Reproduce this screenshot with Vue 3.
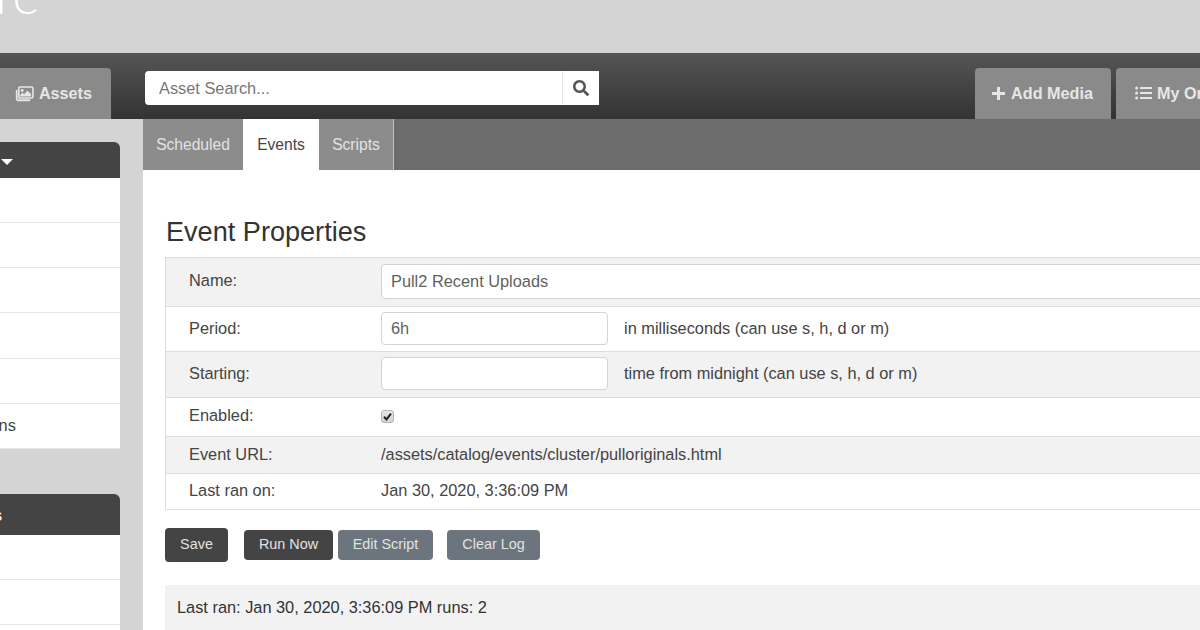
<script setup>
const panels = [
  { title: 'Categories', caret: true, tall: false, rows: ['', '', '', '', '', 'Conversions'] },
  { title: 'Settings', caret: false, tall: true, rows: ['', '', ''] }
]
const tabs = [
  { label: 'Scheduled', active: false },
  { label: 'Events', active: true },
  { label: 'Scripts', active: false }
]
</script>

<template>
  <div class="page">
    <header class="brand"><span class="logo">ue</span></header>

    <nav class="nav">
      <a class="nav-tab assets">
        <svg class="ico-images" viewBox="0 0 18 16" aria-hidden="true">
          <path d="M4.8 1.9h11c.7 0 1.2.5 1.2 1.2v8c0 .7-.5 1.2-1.2 1.2h-11c-.7 0-1.2-.5-1.2-1.2v-8c0-.7.5-1.2 1.2-1.2z" fill="none" stroke="currentColor" stroke-width="1.5"/>
          <path d="M1.6 4.8v8.4c0 .7.5 1.2 1.2 1.2h11.6" fill="none" stroke="currentColor" stroke-width="1.7"/>
          <circle cx="6.8" cy="5.1" r="1.4" fill="currentColor"/>
          <path d="M5 10.9V9l2-1.7 1.6 1.3 3.2-3.3 3.4 3.2v2.4z" fill="currentColor"/>
        </svg>
        Assets
      </a>
      <form class="search" @submit.prevent>
        <input class="search-input" placeholder="Asset Search..." />
        <button class="search-btn" type="button" aria-label="Search">
          <svg viewBox="0 0 512 512" class="ico-search" aria-hidden="true">
            <path fill="currentColor" d="M505 442.7L405.3 343c-4.5-4.5-10.6-7-17-7H372c27.6-35.3 44-79.7 44-128C416 93.1 322.9 0 208 0S0 93.1 0 208s93.1 208 208 208c48.3 0 92.7-16.4 128-44v16.3c0 6.4 2.5 12.5 7 17l99.7 99.7c9.4 9.4 24.6 9.4 33.9 0l28.3-28.3c9.4-9.4 9.4-24.6.1-34zM208 336c-70.7 0-128-57.2-128-128 0-70.7 57.2-128 128-128 70.7 0 128 57.2 128 128 0 70.7-57.2 128-128 128z"/>
          </svg>
        </button>
      </form>
      <a class="nav-tab add">
        <svg class="ico-plus" viewBox="0 0 15 15" aria-hidden="true">
          <path d="M7.5 1v13M1 7.5h13" stroke="currentColor" stroke-width="3" fill="none"/>
        </svg>
        Add Media
      </a>
      <a class="nav-tab orders">
        <svg class="ico-list" viewBox="0 0 17 14" aria-hidden="true">
          <circle cx="1.6" cy="2" r="1.5" fill="currentColor"/>
          <circle cx="1.6" cy="7" r="1.5" fill="currentColor"/>
          <circle cx="1.6" cy="12" r="1.5" fill="currentColor"/>
          <path d="M5 2h12M5 7h12M5 12h12" stroke="currentColor" stroke-width="1.8" fill="none"/>
        </svg>
        My Orders
      </a>
    </nav>

    <div class="body">
      <aside class="sidebar">
        <section v-for="panel in panels" :key="panel.title" class="panel">
          <h4 class="panel-head" :class="{ tall: panel.tall }">
            {{ panel.title }}
            <span v-if="panel.caret" class="caret"></span>
          </h4>
          <ul class="panel-list">
            <li v-for="(row, i) in panel.rows" :key="i">{{ row }}</li>
          </ul>
        </section>
      </aside>

      <main class="main">
        <div class="tabs">
          <a v-for="tab in tabs" :key="tab.label" class="tab" :class="{ active: tab.active }">{{ tab.label }}</a>
        </div>

        <div class="content">
          <h3 class="title">Event Properties</h3>
          <table class="props">
            <tbody>
              <tr class="r1 shade">
                <th>Name:</th>
                <td class="lift"><input class="field wide" value="Pull2 Recent Uploads" /></td>
              </tr>
              <tr class="r2">
                <th>Period:</th>
                <td class="inline lift">
                  <input class="field" value="6h" />
                  <span class="hint">in milliseconds (can use s, h, d or m)</span>
                </td>
              </tr>
              <tr class="r3 shade">
                <th>Starting:</th>
                <td class="inline lift">
                  <input class="field" value="" />
                  <span class="hint">time from midnight (can use s, h, d or m)</span>
                </td>
              </tr>
              <tr class="r4">
                <th>Enabled:</th>
                <td class="lift">
                  <span class="check">
                    <svg viewBox="0 0 13 13" aria-hidden="true">
                      <path d="M3 6.8l2.5 2.6L10 3.6" fill="none" stroke="#222" stroke-width="2"/>
                    </svg>
                  </span>
                </td>
              </tr>
              <tr class="r5 shade">
                <th>Event URL:</th>
                <td class="lift">/assets/catalog/events/cluster/pulloriginals.html</td>
              </tr>
              <tr class="r6">
                <th>Last ran on:</th>
                <td class="lift">Jan 30, 2020, 3:36:09 PM</td>
              </tr>
            </tbody>
          </table>

          <div class="actions">
            <button class="btn dark save">Save</button>
            <button class="btn dark run">Run Now</button>
            <button class="btn grey edit">Edit Script</button>
            <button class="btn grey clear">Clear Log</button>
          </div>

          <div class="log">Last ran: Jan 30, 2020, 3:36:09 PM runs: 2</div>
        </div>
      </main>
    </div>
  </div>
</template>

<style>
html, body { margin: 0; overflow: hidden; background: #d4d4d4; }
</style>

<style scoped>
.page {
  width: 1450px;
  height: 630px;
  margin-left: -100px;
  overflow: hidden;
  display: flex;
  flex-direction: column;
  background: #d4d4d4;
  font-family: "Liberation Sans", Arial, sans-serif;
  font-size: 16.35px;
  color: #444;
}
.brand { height: 53px; overflow: hidden; flex: none; }
.logo {
  display: block;
  margin: -32px 0 0 78px;
  font-family: Lato, sans-serif;
  font-weight: 300;
  font-size: 52px;
  line-height: 52px;
  letter-spacing: 6px;
  color: #fff;
}
.nav {
  height: 66px;
  flex: none;
  display: flex;
  align-items: flex-end;
  padding-right: 98px;
  background: linear-gradient(#555, #333);
}
.nav-tab {
  height: 51px;
  box-sizing: border-box;
  display: flex;
  align-items: center;
  justify-content: center;
  gap: 5px;
  padding-bottom: 1px;
  background: #8a8a8a;
  border-radius: 4px 4px 0 0;
  color: #e6e6e6;
  font-size: 16.2px;
  font-weight: 700;
}
.assets { width: 211px; justify-content: flex-end; padding-right: 19px; }
.add { width: 136px; margin-left: auto; padding-right: 2px; }
.orders { width: 136px; margin-left: 5px; justify-content: flex-start; padding-left: 19px; }
.ico-images { width: 19px; height: 17px; }
.ico-plus { width: 15px; height: 15px; }
.ico-list { width: 17px; height: 14px; }
.search {
  align-self: flex-start;
  display: flex;
  width: 454px;
  height: 34px;
  margin: 18px 0 0 34px;
  background: #fff;
  border-radius: 4px 0 0 4px;
}
.search-input {
  flex: 1;
  min-width: 0;
  border: 0;
  outline: 0;
  padding: 1px 14px 0;
  background: transparent;
  font: inherit;
  border-radius: 4px 0 0 4px;
}
.search-input::placeholder { color: #777; opacity: 1; }
.search-btn {
  width: 37px;
  flex: none;
  border: 0;
  border-left: 1px solid #e6e6e6;
  padding: 0;
  background: #fff;
  color: #555;
  display: flex;
  align-items: center;
  justify-content: center;
}
.ico-search { width: 16px; height: 16px; }

.body { flex: 1; display: flex; min-height: 0; }
.sidebar { width: 220px; flex: none; margin-right: 23px; padding-top: 23px; }
.panel + .panel { margin-top: 45px; }
.panel-head {
  margin: 0;
  height: 36px;
  box-sizing: border-box;
  display: flex;
  align-items: center;
  gap: 4px;
  padding: 3px 0 0 13px;
  background: #444;
  color: #fff;
  font-size: 16px;
  font-weight: 700;
  border-radius: 6px 6px 0 0;
}
.panel-head.tall { height: 41px; padding: 4px 0 0 39px; }
.caret {
  width: 0;
  height: 0;
  margin: 1px 0 0 1px;
  border-style: solid;
  border-width: 6px 6px 0;
  border-color: #fff transparent transparent;
}
.panel-list { list-style: none; margin: 0; padding: 0; background: #fff; }
.panel-list li {
  height: 45.17px;
  box-sizing: border-box;
  padding: 12px 0 0 25px;
  border-bottom: 1px solid #e8e8e8;
  line-height: 18px;
  color: #444;
}

.main { flex: 1; min-width: 0; background: #fff; }
.tabs { height: 51px; display: flex; background: #6c6c6c; }
.tab {
  display: flex;
  align-items: center;
  justify-content: center;
  box-sizing: border-box;
  width: 100px;
  background: #8c8c8c;
  color: #e2e2e2;
  font-size: 15.6px;
}
.tab.active { width: 76px; background: #fff; color: #444; }
.tab:last-child { width: 75px; border-right: 1px solid #bdbdbd; }

.content { padding: 45px 22px 0 22px; }
.title {
  margin: 0 0 8px 1px;
  font-size: 27.1px;
  font-weight: 400;
  line-height: 34px;
  color: #333;
}
.props { width: 100%; border-collapse: collapse; border: 1px solid #ddd; }
.props th, .props td { padding: 0; border-top: 1px solid #ddd; text-align: left; font-weight: 400; }
.props th { width: 192px; padding: 0 0 2px 23px; }
.props .r1 th, .props .r4 th { padding-bottom: 4px; }
.props .lift { padding-bottom: 2px; }
.shade { background: #f2f2f2; }
.r1 { height: 49px; }
.r2 { height: 45px; }
.r3 { height: 46px; }
.r4 { height: 39px; }
.r5 { height: 37px; }
.r6 { height: 36px; }
.inline { white-space: nowrap; }
.field {
  box-sizing: border-box;
  width: 227px;
  height: 33px;
  padding: 0 9px;
  border: 1px solid #ced4da;
  border-radius: 4px;
  background: #fff;
  color: #5f5f5f;
  font: inherit;
  vertical-align: middle;
}
.field.wide { width: calc(100% - 4px); height: 35px; }
.hint { margin-left: 16px; vertical-align: middle; }
.check {
  display: block;
  box-sizing: border-box;
  width: 13px;
  height: 13px;
  border: 1px solid #b5b5b5;
  border-radius: 3px;
  background: linear-gradient(#e6e6e6, #d2d2d2);
}
.check svg { display: block; width: 13px; height: 13px; margin: -1px; }

.actions { display: flex; align-items: center; margin-top: 18px; }
.btn {
  height: 30px;
  padding: 0 0 3px;
  border: 1px solid transparent;
  border-radius: 4px;
  color: #e2e2e2;
  font-family: inherit;
  font-size: 14.4px;
}
.dark { background: #444; }
.grey { background: #6c757d; }
.save { width: 63px; height: 34px; }
.run { width: 89px; margin-left: 16px; }
.edit { width: 95px; margin-left: 5px; }
.clear { width: 93px; margin-left: 14px; }
.log {
  margin-top: 23px;
  height: 80px;
  box-sizing: border-box;
  padding: 11px 12px;
  background: #f2f2f2;
  line-height: 22px;
  color: #333;
}
</style>
